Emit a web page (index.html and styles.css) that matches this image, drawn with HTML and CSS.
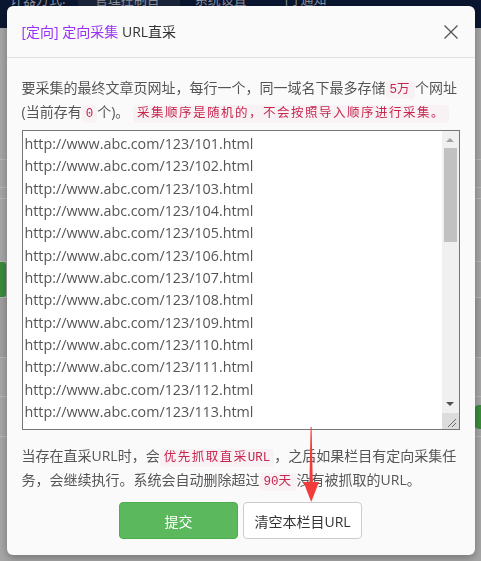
FILE: index.html
```html
<!DOCTYPE html>
<html lang="zh-CN">
<head>
<meta charset="utf-8">
<title>URL直采</title>
<link rel="stylesheet" href="styles.css">
</head>
<body>
<div class="page">
  <nav class="topnav">
    <span class="nav-item">计器方式.</span>
    <span class="nav-item active">管理控制台</span>
    <span class="nav-item">系统设置</span>
    <span class="nav-item">门 通知</span>
  </nav>
  <div class="bg-rows">
    <div class="bg-row r1"></div>
    <div class="bg-row r2"></div>
    <div class="bg-row r3"></div>
    <div class="bg-row r4"></div>
    <div class="bg-row r5"><span class="chip chip-left"></span></div>
    <div class="bg-row r6"></div>
    <div class="bg-row r7"></div>
    <div class="bg-row r8"><span class="chip chip-right"></span></div>
    <div class="bg-row r9"></div>
  </div>
</div>

<div class="overlay">
  <div class="modal">
    <div class="modal-header">
      <h4 class="modal-title"><span class="tag">[定向] 定向采集</span> URL直采</h4>
      <button class="close" type="button" aria-label="关闭">
        <svg width="14" height="14" viewBox="0 0 14 14"><path d="M0.5 0.5 L13.5 13.5 M13.5 0.5 L0.5 13.5" stroke="#555" stroke-width="1.3" fill="none"/></svg>
      </button>
    </div>
    <div class="modal-body">
      <p class="hint">要采集的最终文章页网址，每行一个，同一域名下最多存储<code><span class="en">5</span>万</code>个网址<br>(当前存有<code class="en">0</code>个)。 <code>采集顺序是随机的，不会按照导入顺序进行采集。</code></p>
      <div class="url-box">
        <textarea class="urls" spellcheck="false">http://www.abc.com/123/101.html
http://www.abc.com/123/102.html
http://www.abc.com/123/103.html
http://www.abc.com/123/104.html
http://www.abc.com/123/105.html
http://www.abc.com/123/106.html
http://www.abc.com/123/107.html
http://www.abc.com/123/108.html
http://www.abc.com/123/109.html
http://www.abc.com/123/110.html
http://www.abc.com/123/111.html
http://www.abc.com/123/112.html
http://www.abc.com/123/113.html
http://www.abc.com/123/114.html
http://www.abc.com/123/115.html
http://www.abc.com/123/116.html
http://www.abc.com/123/117.html
http://www.abc.com/123/118.html
http://www.abc.com/123/119.html
http://www.abc.com/123/120.html
http://www.abc.com/123/121.html
http://www.abc.com/123/122.html
http://www.abc.com/123/123.html
http://www.abc.com/123/124.html
http://www.abc.com/123/125.html
http://www.abc.com/123/126.html
http://www.abc.com/123/127.html
http://www.abc.com/123/128.html
http://www.abc.com/123/129.html
http://www.abc.com/123/130.html
http://www.abc.com/123/131.html
http://www.abc.com/123/132.html
http://www.abc.com/123/133.html
http://www.abc.com/123/134.html
http://www.abc.com/123/135.html</textarea>
        <div class="scrollbar" aria-hidden="true">
          <div class="sb-btn">
            <svg width="8" height="4" viewBox="0 0 8 4"><polygon points="0,4 8,4 4,0" fill="#a3a3a3"/></svg>
          </div>
          <div class="sb-track"><div class="sb-thumb"></div></div>
          <div class="sb-btn sb-down">
            <svg width="8" height="4" viewBox="0 0 8 4"><polygon points="0,0 8,0 4,4" fill="#505050"/></svg>
          </div>
          <div class="sb-resizer">
            <svg width="16" height="16" viewBox="0 0 16 16"><path d="M6 14 L14 6 M10 14 L14 10" stroke="#6a6a6a" stroke-width="1" fill="none"/></svg>
          </div>
        </div>
      </div>
      <p class="hint hint-bottom">当存在直采URL时，会<code>优先抓取直采<span class="en">URL</span></code>，之后如果栏目有定向采集任<br>务，会继续执行。系统会自动删除超过<code><span class="en">90</span>天</code>没有被抓取的URL。</p>
      <div class="actions">
        <button class="btn btn-green" type="button">提交</button>
        <button class="btn btn-default" type="button">清空本栏目URL</button>
      </div>
    </div>
    <svg class="arrow" width="20" height="80" viewBox="0 0 20 80">
      <polygon points="7.6,1 8.6,1 9.8,58 6.4,58" fill="#f23b3b"/>
      <polygon points="0.5,56 16,56 8.2,76" fill="#f23b3b"/>
    </svg>
  </div>
</div>
</body>
</html>
```
FILE: styles.css
```css
* { box-sizing: border-box; }

html, body {
  margin: 0;
  padding: 0;
  width: 481px;
  height: 561px;
  overflow: hidden;
}

body {
  font-family: "Open Sans", "Noto Sans CJK SC", sans-serif;
  font-size: 14px;
  color: #555;
  background: #a6a6a6;
}

/* ---------- dimmed page behind the dialog ---------- */
.page {
  display: flex;
  flex-direction: column;
  height: 561px;
}

.topnav {
  height: 28px;
  flex: 0 0 28px;
  background: #0b1630;
  display: flex;
  align-items: flex-start;
  padding-left: 10px;
  overflow: hidden;
}

.nav-item {
  font-family: "Noto Sans CJK SC", sans-serif;
  font-size: 13px;
  line-height: 16px;
  margin-top: -9px;
  color: #8d929e;
  white-space: nowrap;
}

.nav-item:nth-child(1) { margin-right: 12px; }
.nav-item:nth-child(3) { margin-left: 15px; margin-right: 38px; }

.nav-item.active {
  background: #1b2539;
  width: 102px;
  padding: 0 0 0 17px;
  height: 40px;
  margin-top: -9px;
}

.bg-rows {
  flex: 1;
  display: flex;
  flex-direction: column;
}

.bg-row {
  border-bottom: 1px solid #b6b6b6;
  display: flex;
  justify-content: space-between;
  align-items: center;
}

.r1 { height: 132px; }
.r2 { height: 28px; }
.r3 { height: 11px; }
.r4 { height: 63px; }
.r5 { height: 36px; align-items: stretch; }
.r6 { height: 60px; background: #9f9f9f; }
.r7 { height: 39px; }
.r8 { height: 40px; }
.r9 { flex: 1; border-bottom: 0; }

.chip {
  display: block;
  background: #3b8a3b;
}

.chip-left {
  width: 40px;
  margin-left: -34px;
  border-radius: 3px;
}

.chip-right {
  width: 40px;
  height: 24px;
  margin-left: auto;
  margin-right: -33px;
  border-radius: 5px;
}

/* ---------- dialog ---------- */
.overlay {
  position: fixed;
  inset: 0;
  display: flex;
  justify-content: center;
  align-items: flex-start;
  padding-top: 6px;
}

.modal {
  position: relative;
  width: 468px;
  background: #fafafa;
  border-radius: 6px;
  box-shadow: 0 3px 9px rgba(0, 0, 0, 0.3);
}

.modal-header {
  display: flex;
  align-items: center;
  justify-content: space-between;
  padding: 15px 17px 15px 15px;
  border-bottom: 1px solid #e3e3e3;
}

.modal-title {
  margin: 0;
  font-size: 14px;
  font-weight: normal;
  line-height: 21px;
  color: #333;
}

.tag { color: #9a30f5; }

.close {
  border: 0;
  background: none;
  padding: 0;
  width: 14px;
  height: 14px;
  display: flex;
  cursor: pointer;
}

.modal-body {
  padding: 18px 15px 16px;
}

.hint {
  margin: 0;
  line-height: 24px;
  color: #555;
}

.hint-bottom { margin-top: 14px; }

code {
  font-family: "Liberation Mono", "Noto Sans CJK SC", monospace;
  font-size: 12.5px;
  line-height: 14px;
  letter-spacing: 1.5px;
  padding: 2px 4px;
  color: #c7254e;
  background: #f9f2f4;
  border-radius: 4px;
}

code .en, code.en { letter-spacing: 0; }

/* URL list with a Windows-style scrollbar */
.url-box {
  display: flex;
  align-items: flex-start;
  height: 300px;
  margin-top: 6px;
  border: 1px solid #767676;
  background: #fff;
}

.urls {
  flex: 1;
  min-width: 0;
  height: 292px;
  margin: 0;
  padding: 2px 2px 0;
  border: 0;
  outline: none;
  resize: none;
  background: transparent;
  color: #555;
  font-family: "Open Sans", sans-serif;
  font-size: 14.3px;
  line-height: 22.33px;
  white-space: pre;
  overflow: hidden;
}

.scrollbar {
  width: 17px;
  height: 100%;
  display: flex;
  flex-direction: column;
  background: #f0f0f0;
}

.sb-btn {
  height: 17px;
  flex: 0 0 17px;
  display: flex;
  justify-content: center;
  align-items: flex-start;
  padding-top: 7px;
}

.sb-btn svg { display: block; }

.sb-down { padding-top: 6px; }

.sb-track {
  flex: 1;
  padding: 0 2px;
}

.sb-thumb {
  height: 94px;
  background: #c1c1c1;
}

.sb-resizer {
  height: 16px;
  flex: 0 0 16px;
  background: #dcdcdc;
}

.sb-resizer svg { display: block; }

.actions {
  display: flex;
  justify-content: center;
  gap: 5px;
  margin-top: 10px;
}

.btn {
  width: 119px;
  height: 37px;
  border-radius: 4px;
  font-family: "Open Sans", "Noto Sans CJK SC", sans-serif;
  font-size: 14px;
  display: flex;
  align-items: center;
  justify-content: center;
  cursor: pointer;
  padding: 0;
}

.btn-green {
  background: #5cb85c;
  border: 1px solid #4cae4c;
  color: #fff;
}

.btn-default {
  background: #fff;
  border: 1px solid #ccc;
  color: #333;
}

.arrow {
  position: absolute;
  left: 296px;
  top: 420px;
}
```
